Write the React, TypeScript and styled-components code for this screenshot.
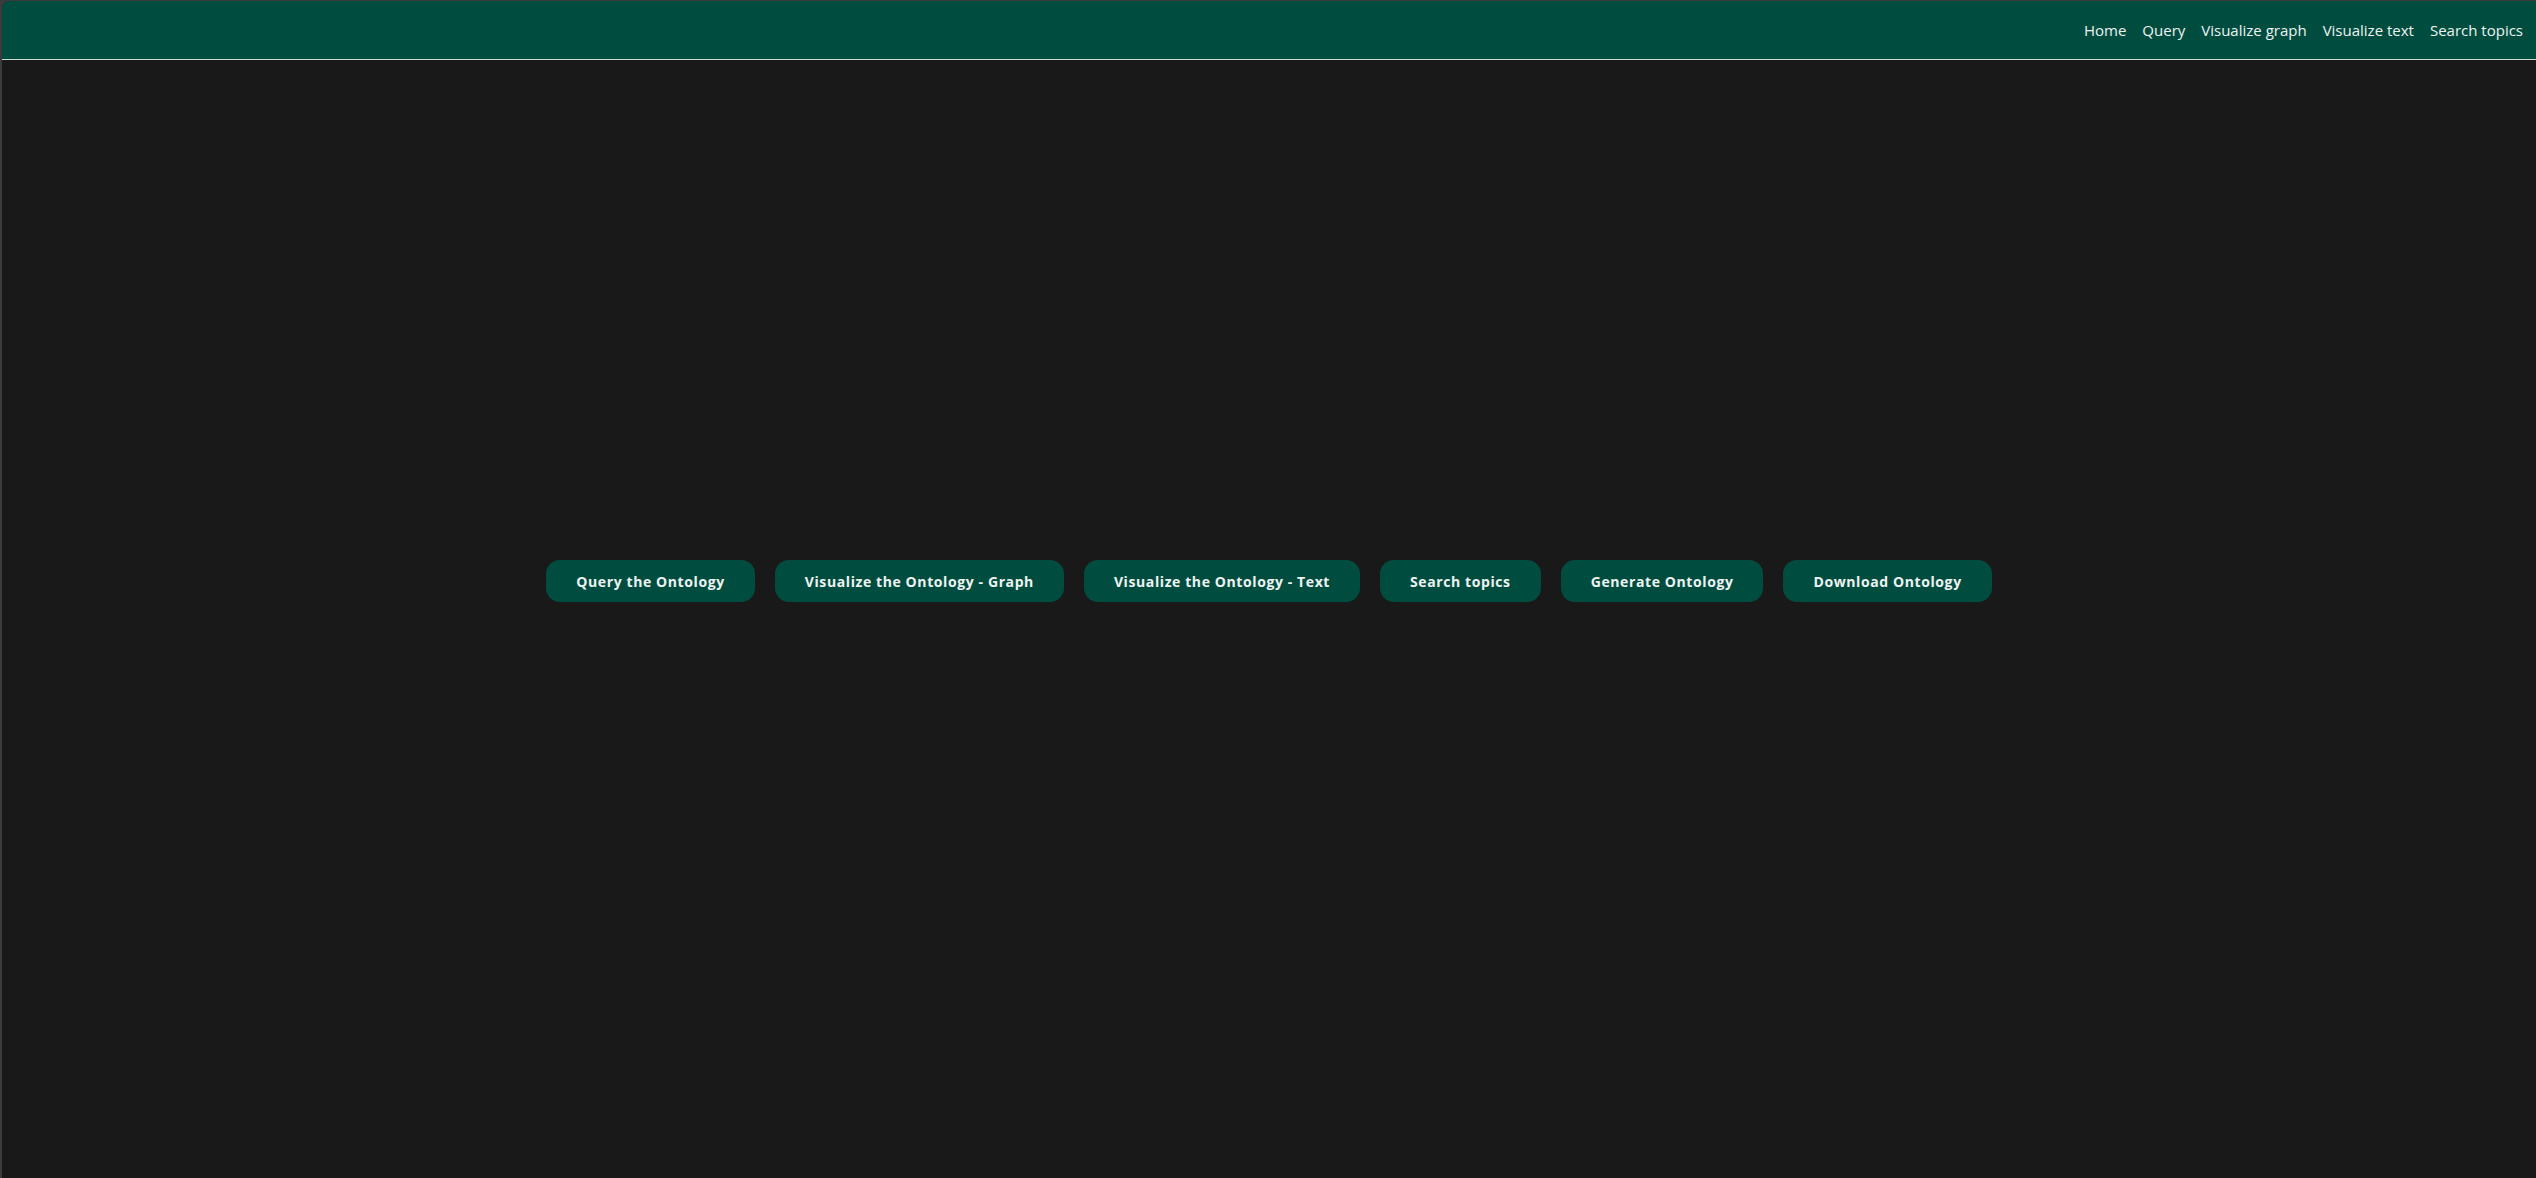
import React from "react";
import styled, { createGlobalStyle } from "styled-components";

const GlobalStyle = createGlobalStyle`
  html, body {
    margin: 0;
    padding: 0;
    background: #3b3b3b;
  }
  #root {
    min-height: 100vh;
  }
  * { box-sizing: border-box; }
`;

const Frame = styled.div`
  height: 1178px;
  padding: 1px 0 0 2px;
  background: #3b3b3b;
  display: flex;
  flex-direction: column;
`;

const Window = styled.div`
  flex: 1;
  display: flex;
  flex-direction: column;
  background: #191919;
  border-top-left-radius: 8px;
  overflow: hidden;
  font-family: "Open Sans", "Noto Sans", sans-serif;
`;

const Header = styled.header`
  height: 59px;
  flex: none;
  background: #004d40;
  border-bottom: 1px solid #c9ddd7;
  display: flex;
  align-items: center;
  justify-content: flex-end;
  padding: 0 5px 0 0;
`;

const Nav = styled.nav`
  display: flex;
  align-items: center;
`;

const NavLink = styled.a`
  color: #eef2f1;
  font-size: 15px;
  text-decoration: none;
  padding: 0 8px;
  cursor: pointer;
`;

const Main = styled.main`
  flex: 1;
  display: flex;
  justify-content: center;
  align-items: flex-start;
  padding: 500px 0 0 0;
`;

const ButtonRow = styled.div`
  display: flex;
  gap: 20px;
`;

const ActionButton = styled.button`
  height: 42px;
  padding: 0 30px;
  border: none;
  border-radius: 14px;
  background: #004d40;
  color: #eef3f1;
  font-family: "Open Sans", "Noto Sans", sans-serif;
  font-weight: 700;
  font-size: 14px;
  letter-spacing: 0.6px;
  cursor: pointer;
  white-space: nowrap;
`;

const links = ["Home", "Query", "Visualize graph", "Visualize text", "Search topics"];
const actions = [
  "Query the Ontology",
  "Visualize the Ontology - Graph",
  "Visualize the Ontology - Text",
  "Search topics",
  "Generate Ontology",
  "Download Ontology",
];

export default function App() {
  return (
    <>
      <GlobalStyle />
      <Frame>
        <Window>
          <Header>
            <Nav>
              {links.map((l) => (
                <NavLink key={l}>{l}</NavLink>
              ))}
            </Nav>
          </Header>
          <Main>
            <ButtonRow>
              {actions.map((a) => (
                <ActionButton key={a}>{a}</ActionButton>
              ))}
            </ButtonRow>
          </Main>
        </Window>
      </Frame>
    </>
  );
}
